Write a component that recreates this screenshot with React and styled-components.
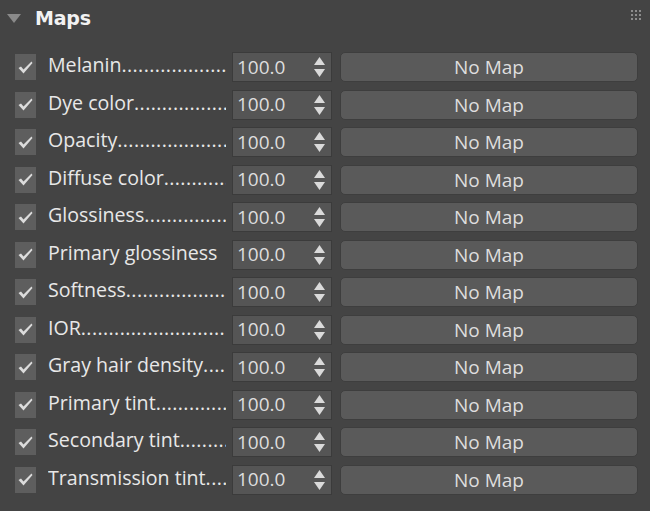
import React from "react";
import styled, { createGlobalStyle } from "styled-components";

const GlobalStyle = createGlobalStyle`
  html, body {
    margin: 0;
    padding: 0;
    background: #444444;
  }
  body {
    font-family: "Open Sans", "Noto Sans", sans-serif;
  }
`;

const Panel = styled.div`
  width: 650px;
  height: 511px;
  background: #444444;
  color: #e4e4e4;
  overflow: hidden;
  box-sizing: border-box;
`;

const Header = styled.div`
  height: 36px;
  display: flex;
  align-items: center;
  padding: 0 9px 0 7px;
  box-sizing: border-box;
`;

const Title = styled.div`
  flex: 1;
  margin-left: 14px;
  font-family: "DejaVu Sans", sans-serif;
  font-weight: bold;
  font-size: 19px;
  color: #f2f2f2;
  letter-spacing: -0.2px;
`;

const Grip = styled.div`
  display: grid;
  grid-template-columns: repeat(3, 2px);
  grid-auto-rows: 2px;
  gap: 2px;
  margin-top: -6px;

  span {
    background: #8c8c8c;
  }
`;

const Rows = styled.div`
  display: flex;
  flex-direction: column;
  gap: 7.5px;
  padding: 16px 12px 0 15px;
`;

const Row = styled.div`
  display: flex;
  align-items: center;
  height: 30px;
`;

const Check = styled.div`
  width: 21px;
  height: 26px;
  background: #5e5e5e;
  display: flex;
  align-items: center;
  justify-content: center;
  flex-shrink: 0;
`;

const Label = styled.div`
  width: 178px;
  height: 30px;
  margin-left: 12px;
  margin-right: 6px;
  display: flex;
  align-items: center;
  font-size: 19.6px;
  white-space: nowrap;
  overflow: hidden;
  color: #e8e8e8;
  flex-shrink: 0;
`;

const Name = styled.span`
  flex-shrink: 0;
  margin-top: -5px;
`;

const Leader = styled.span`
  flex: 1;
  min-width: 0;
  overflow: hidden;
  letter-spacing: 0.4px;
  margin-top: -5px;
`;

const Spinner = styled.div`
  width: 100px;
  height: 30px;
  box-sizing: border-box;
  background: #555555;
  border: 1px solid #3b3b3b;
  display: flex;
  align-items: center;
  justify-content: space-between;
  padding: 0 6px 0 4px;
  flex-shrink: 0;
`;

const Value = styled.span`
  font-size: 19px;
  color: #dedede;
  margin-top: -1px;
`;

const MapButton = styled.div`
  flex: 1;
  height: 30px;
  margin-left: 8px;
  box-sizing: border-box;
  background: #5a5a5a;
  border: 1px solid #3e3e3e;
  border-radius: 5px;
  display: flex;
  align-items: center;
  justify-content: center;
  font-size: 19px;
  color: #dedede;
`;

const CheckMark = () => (
  <svg width="15" height="13" viewBox="0 0 15 13">
    <path d="M0.5 7 L3 5.5 L5.5 8.5 L13.5 0.5 L14.5 2 L5.5 12.5 Z" fill="#dcdcdc" />
  </svg>
);

const Arrows = () => (
  <svg width="11" height="20" viewBox="0 0 11 20">
    <path d="M5.5 0 L11 8 L0 8 Z" fill="#dadada" />
    <path d="M0 12 L11 12 L5.5 20 Z" fill="#dadada" />
  </svg>
);

const Toggle = () => (
  <svg width="14" height="9" viewBox="0 0 14 9">
    <path d="M0 0 L14 0 L7 9 Z" fill="#8a8a8a" />
  </svg>
);

const DOTS = "................................................";

const maps = [
  "Melanin",
  "Dye color",
  "Opacity",
  "Diffuse color",
  "Glossiness",
  "Primary glossiness",
  "Softness",
  "IOR",
  "Gray hair density",
  "Primary tint",
  "Secondary tint",
  "Transmission tint",
];

const App = () => {
  return (
    <Panel>
      <GlobalStyle />
      <Header>
        <Toggle />
        <Title>Maps</Title>
        <Grip>
          {Array.from({ length: 9 }).map((_, i) => (
            <span key={i} />
          ))}
        </Grip>
      </Header>
      <Rows>
        {maps.map((name) => (
          <Row key={name}>
            <Check>
              <CheckMark />
            </Check>
            <Label>
              <Name>{name}</Name>
              {name !== "Primary glossiness" && <Leader>{DOTS}</Leader>}
            </Label>
            <Spinner>
              <Value>100.0</Value>
              <Arrows />
            </Spinner>
            <MapButton>No Map</MapButton>
          </Row>
        ))}
      </Rows>
    </Panel>
  );
};

export default App;
